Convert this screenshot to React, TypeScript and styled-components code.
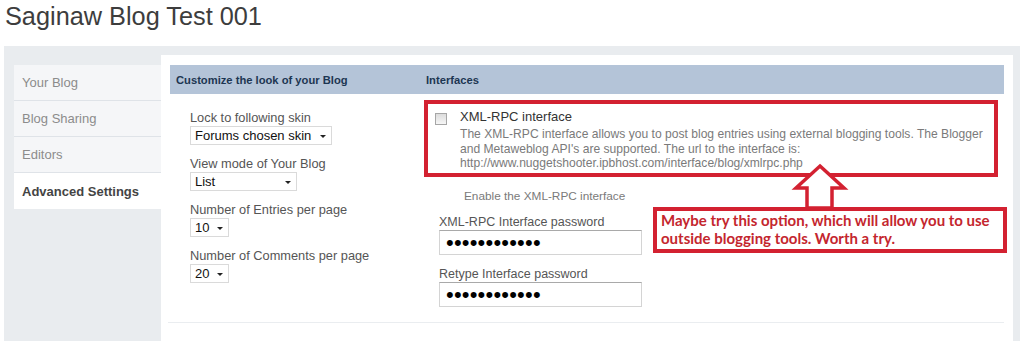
import styled, { createGlobalStyle } from "styled-components"

const GlobalStyle = createGlobalStyle`
  html, body {
    margin: 0;
    padding: 0;
    background: #ffffff;
    font-family: "Liberation Sans", Arial, sans-serif;
  }
`

const Page = styled.div`
  width: 1024px;
  height: 341px;
  overflow: hidden;
`

const Title = styled.h1`
  margin: 0;
  padding: 2px 0 0 5px;
  height: 46px;
  box-sizing: border-box;
  font-size: 25.3px;
  font-weight: normal;
  line-height: 28px;
  color: #3d3d3d;
`

const Shell = styled.div`
  display: flex;
  margin-left: 4px;
  width: 1016px;
  min-height: 300px;
  box-sizing: border-box;
  padding: 9px 7px 0 10px;
  background: #e9ecef;
`

const Sidebar = styled.nav`
  width: 147px;
  margin-top: 10px;
  display: flex;
  flex-direction: column;
  align-self: flex-start;
`

const Tab = styled.div<{ $active?: boolean }>`
  height: 36px;
  box-sizing: border-box;
  display: flex;
  align-items: center;
  padding: 0 0 0 8px;
  font-size: 13px;
  border-bottom: ${({ $active }) => ($active ? "none" : "1px solid #dfe3e8")};
  background: ${({ $active }) => ($active ? "#ffffff" : "#f5f6f8")};
  color: ${({ $active }) => ($active ? "#444444" : "#8c8c8c")};
  font-weight: ${({ $active }) => ($active ? "bold" : "normal")};
`

const Content = styled.main`
  flex: 1;
  background: #ffffff;
  padding: 10px 9px;
`

const HeadRow = styled.div`
  display: grid;
  grid-template-columns: 250px 1fr;
  height: 29px;
  align-items: center;
  background: #b4c4d8;
`

const HeadCell = styled.div`
  padding-left: 6px;
  font-size: 11.2px;
  font-weight: bold;
  color: #1d3652;
`

const Body = styled.div`
  display: grid;
  grid-template-columns: 250px 1fr;
`

const LeftCol = styled.div`
  display: flex;
  flex-direction: column;
  gap: 11px;
  padding: 16px 0 0 20px;
`

const Field = styled.div`
  display: flex;
  flex-direction: column;
  align-items: flex-start;
  gap: 1px;
`

const Label = styled.label`
  font-size: 12.8px;
  line-height: 15px;
  color: #555555;
`

const Select = styled.div<{ $width: number }>`
  width: ${({ $width }) => $width}px;
  height: 19px;
  box-sizing: border-box;
  display: flex;
  align-items: center;
  justify-content: space-between;
  padding: 0 5px 0 4px;
  border: 1px solid #dadada;
  font-size: 13px;
  color: #111111;
  &::after {
    content: "";
    border-left: 3.5px solid transparent;
    border-right: 3.5px solid transparent;
    border-top: 3.5px solid #222222;
    margin-top: 2px;
  }
`

const RightCol = styled.div`
  position: relative;
  display: flex;
  flex-direction: column;
`

const Outline = styled.div`
  margin: 6px 6px 0 4px;
  height: 77px;
  box-sizing: border-box;
  border: 4px solid #d32131;
  display: flex;
  gap: 13px;
  padding: 5px 0 0 7px;
`

const Checkbox = styled.span`
  flex: none;
  width: 12px;
  height: 12px;
  margin-top: 4px;
  box-sizing: border-box;
  border: 1px solid #a6a6a6;
  background: linear-gradient(#dcdcdc, #f6f6f6);
`

const OptionText = styled.div`
  display: flex;
  flex-direction: column;
  white-space: nowrap;
`

const OptionTitle = styled.div`
  font-size: 13px;
  line-height: 16px;
  color: #333333;
`

const OptionDesc = styled.div`
  margin-top: 2px;
  font-size: 12.1px;
  line-height: 14.5px;
  color: #7a7a7a;
`

const Hint = styled.div`
  margin: 12px 0 0 44px;
  font-size: 11.8px;
  line-height: 15px;
  color: #7a7a7a;
`

const Passwords = styled.div`
  display: flex;
  flex-direction: column;
  gap: 11px;
  margin: 10px 0 0 19px;
`

const PasswordField = styled.div`
  display: flex;
  flex-direction: column;
`

const PasswordLabel = styled.label`
  font-size: 12.5px;
  line-height: 16px;
  color: #555555;
`

const PasswordBox = styled.div`
  width: 203px;
  height: 25px;
  box-sizing: border-box;
  border: 1px solid #d4d4d4;
  border-top-color: #a9a9a9;
  padding-left: 6px;
  display: flex;
  align-items: center;
  font-size: 22px;
  line-height: 1;
  color: #000000;
  letter-spacing: 0.2px;
`

const Callout = styled.div`
  position: absolute;
  left: 233px;
  top: 113px;
  width: 354px;
  height: 46px;
  box-sizing: border-box;
  border: 4px solid #d32131;
  padding: 0 4px;
  font-family: Lato, "Open Sans", sans-serif;
  font-weight: bold;
  font-size: 15px;
  line-height: 18px;
  color: #c4262e;
  background: #ffffff;
  white-space: nowrap;
`

const Arrow = styled.svg`
  position: absolute;
  left: 374px;
  top: 68px;
  overflow: visible;
`

const Divider = styled.div`
  margin: 15px 0 0 -2px;
  height: 1px;
  background: #eaedf0;
`

const leftFields = [
  { label: "Lock to following skin", value: "Forums chosen skin", width: 142 },
  { label: "View mode of Your Blog", value: "List", width: 107 },
  { label: "Number of Entries per page", value: "10", width: 39 },
  { label: "Number of Comments per page", value: "20", width: 39 },
]

const tabs = ["Your Blog", "Blog Sharing", "Editors", "Advanced Settings"]

export default function App() {
  return (
    <Page>
      <GlobalStyle />
      <Title>Saginaw Blog Test 001</Title>
      <Shell>
        <Sidebar>
          {tabs.map((t) => (
            <Tab key={t} $active={t === "Advanced Settings"}>
              {t}
            </Tab>
          ))}
        </Sidebar>
        <Content>
          <HeadRow>
            <HeadCell>Customize the look of your Blog</HeadCell>
            <HeadCell>Interfaces</HeadCell>
          </HeadRow>
          <Body>
            <LeftCol>
              {leftFields.map((f) => (
                <Field key={f.label}>
                  <Label>{f.label}</Label>
                  <Select $width={f.width}>{f.value}</Select>
                </Field>
              ))}
            </LeftCol>
            <RightCol>
              <Outline>
                <Checkbox />
                <OptionText>
                  <OptionTitle>XML-RPC interface</OptionTitle>
                  <OptionDesc>
                    The XML-RPC interface allows you to post blog entries using external blogging tools. The Blogger
                    <br />
                    and Metaweblog API's are supported. The url to the interface is:
                    <br />
                    http://www.nuggetshooter.ipbhost.com/interface/blog/xmlrpc.php
                  </OptionDesc>
                </OptionText>
              </Outline>
              <Hint>Enable the XML-RPC interface</Hint>
              <Passwords>
                <PasswordField>
                  <PasswordLabel>XML-RPC Interface password</PasswordLabel>
                  <PasswordBox>••••••••••••</PasswordBox>
                </PasswordField>
                <PasswordField>
                  <PasswordLabel>Retype Interface password</PasswordLabel>
                  <PasswordBox>••••••••••••</PasswordBox>
                </PasswordField>
              </Passwords>
              <Arrow width="54" height="50" viewBox="0 0 54 50">
                <path
                  d="M26 4 L50 26 L38 26 L38 46 L13 46 L13 26 L2 26 Z"
                  fill="#ffffff"
                  stroke="#d32131"
                  strokeWidth="3.5"
                  strokeLinejoin="miter"
                />
              </Arrow>
              <Callout>
                Maybe try this option, which will allow you to use
                <br />
                outside blogging tools. Worth a try.
              </Callout>
            </RightCol>
          </Body>
          <Divider />
        </Content>
      </Shell>
    </Page>
  )
}
